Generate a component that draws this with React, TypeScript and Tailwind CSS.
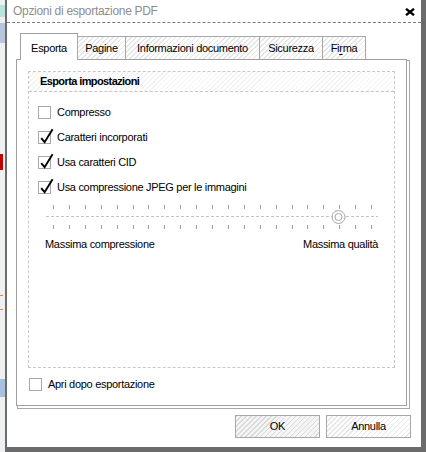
import React from 'react';

const hatch =
  'bg-[repeating-linear-gradient(135deg,#e6e6e6_0px,#e6e6e6_1px,#ffffff_1px,#ffffff_3.5px)]';
const hatchDark =
  'bg-[repeating-linear-gradient(135deg,#d9d9d9_0px,#d9d9d9_1px,#f5f5f5_1px,#f5f5f5_3.5px)]';
const hatchLight =
  'bg-[repeating-linear-gradient(135deg,#f3f3f3_0px,#f3f3f3_1px,#ffffff_1px,#ffffff_3.5px)]';

const Checkbox = ({ checked }: { checked?: boolean }) => (
  <span className="relative block w-[13px] h-[13px] border border-[#a8a8a8] bg-white shrink-0">
    {checked && (
      <svg
        width="14"
        height="16"
        viewBox="0 0 14 16"
        className="absolute left-[1px] top-[-4px] overflow-visible"
      >
        <path d="M1.2 10.2 L4.6 14.2 L12.6 1.2" fill="none" stroke="#000" strokeWidth="1.9" />
      </svg>
    )}
  </span>
);

const Row = ({ label, checked }: { label: string; checked?: boolean }) => (
  <div className="h-[25px] flex items-center gap-[6px]">
    <Checkbox checked={checked} />
    <span>{label}</span>
  </div>
);

const tabs = [
  { label: 'Esporta', cls: 'w-[58px]', active: true },
  { label: 'Pagine', cls: 'w-[49px]' },
  { label: 'Informazioni documento', cls: 'w-[135px]' },
  { label: 'Sicurezza', cls: 'w-[64px]' },
  { label: 'Firma', cls: 'w-[44px]' },
];

const Slider = () => {
  const ticks = Array.from({ length: 21 }, (_, i) => 7.5 + Math.round(i * 15.9));
  return (
    <svg width="332" height="32" className="block ml-[17px] mt-[1px]">
      {ticks.map((x) => (
        <g key={x}>
          <line x1={x} x2={x} y1={4} y2={8} stroke="#a0a0a0" />
          <line x1={x} x2={x} y1={24} y2={28} stroke="#a0a0a0" />
        </g>
      ))}
      <line x1={0} x2={332} y1={15.5} y2={15.5} stroke="#c4c4c4" strokeDasharray="3 2" />
      <circle cx={292.5} cy={16} r={6.5} fill="#ffffff" stroke="#a8a8a8" />
      <circle cx={292.5} cy={16} r={3.5} fill="none" stroke="#a8a8a8" />
    </svg>
  );
};

const LeftStrip = () => (
  <div className="w-[5px] flex flex-col bg-[#eef0f2]">
    <div className="h-[5px]" />
    <div className="h-[12px] bg-[#b9e3de]" />
    <div className="h-[6px]" />
    <div className="h-[20px] bg-[#b8c6dc]" />
    <div className="h-[111px]" />
    <div className="h-[16px] w-[3px] bg-[#c00000]" />
    <div className="h-[125px]" />
    <div className="h-[1px] w-[3px] bg-[#e09030]" />
    <div className="h-[13px]" />
    <div className="h-[1px] w-[3px] bg-[#e09030]" />
    <div className="h-[69px]" />
    <div className="h-[18px] bg-[#a8c0e0]" />
  </div>
);

export default function App() {
  return (
    <div className="w-[426px] h-[452px] flex overflow-hidden font-['Liberation_Sans',Arial,sans-serif] text-[11px] tracking-[-0.3px] text-black">
      <LeftStrip />
      <div className="flex-1 flex flex-col bg-white border-l-2 border-r-[5px] border-b-[5px] border-[#6b6b6b]">
        {/* title bar */}
        <div className="h-[23px] shrink-0 flex items-center justify-between pl-[6px] pr-[6px] border-b border-dashed border-[#7a7a7a]">
          <span className="text-[12px] text-[#8e8e8e]">Opzioni di esportazione PDF</span>
          <svg width="10" height="8" viewBox="0 0 10 8" className="mt-[1px]">
            <path d="M1 0.8 L9 7.2 M9 0.8 L1 7.2" stroke="#000" strokeWidth="2.3" />
          </svg>
        </div>

        {/* tabs */}
        <div className="mt-[10px] ml-[13px] h-[26px] shrink-0 flex items-end relative z-10">
          {tabs.map((t, i) =>
            t.active ? (
              <div
                key={t.label}
                className={`${t.cls} h-[27px] mb-[-1px] pt-[3px] bg-white border border-b-0 border-[#a0a0a0] flex items-center justify-center`}
              >
                {t.label}
              </div>
            ) : (
              <div
                key={t.label}
                className={`${t.cls} h-[23px] ${i > 0 ? '-ml-px' : ''} ${hatch} border border-b-0 border-[#a8a8a8] flex items-center justify-center`}
              >
                {t.label === 'Firma' ? (
                  <span>
                    Fi<span className="underline underline-offset-2">r</span>ma
                  </span>
                ) : (
                  t.label
                )}
              </div>
            ),
          )}
        </div>

        {/* panel */}
        <div className="ml-[9px] mr-[14px] h-[347px] shrink-0 border border-[#a0a0a0] bg-white flex flex-col shadow-[2px_2px_0_0_#ffffff,2px_2px_0_1px_#a8a8a8]">
          <div className="mt-[11px] ml-[11px] mr-[11px] h-[297px] border border-dashed border-[#c8c8c8] flex flex-col">
            <div className={`h-[20px] shrink-0 border-b border-dashed border-[#c8c8c8] pl-[11px] flex items-center font-bold tracking-[-0.6px] ${hatchLight}`}>
              Esporta impostazioni
            </div>
            <div className="pt-[8px] pl-[9px] flex flex-col">
              <Row label="Compresso" />
              <Row label="Caratteri incorporati" checked />
              <Row label="Usa caratteri CID" checked />
              <Row label="Usa compressione JPEG per le immagini" checked />
            </div>
            <Slider />
            <div className="mt-[3px] ml-[16px] w-[333px] h-[16px] flex items-center justify-between">
              <span>Massima compressione</span>
              <span>Massima qualità</span>
            </div>
          </div>
          <div className="mt-[8px] ml-[12px] h-[17px] flex items-center gap-[6px]">
            <Checkbox />
            <span>Apri dopo esportazione</span>
          </div>
        </div>

        {/* buttons */}
        <div className="mt-[9px] mr-[10px] flex justify-end gap-[6px] shrink-0">
          <button className={`w-[85px] h-[23px] border border-[#a8a8a8] ${hatchDark} flex items-center justify-center`}>
            OK
          </button>
          <button className={`w-[85px] h-[23px] border border-[#a8a8a8] ${hatch} flex items-center justify-center`}>
            Annulla
          </button>
        </div>
        <div className="flex-1" />
      </div>
    </div>
  );
}
